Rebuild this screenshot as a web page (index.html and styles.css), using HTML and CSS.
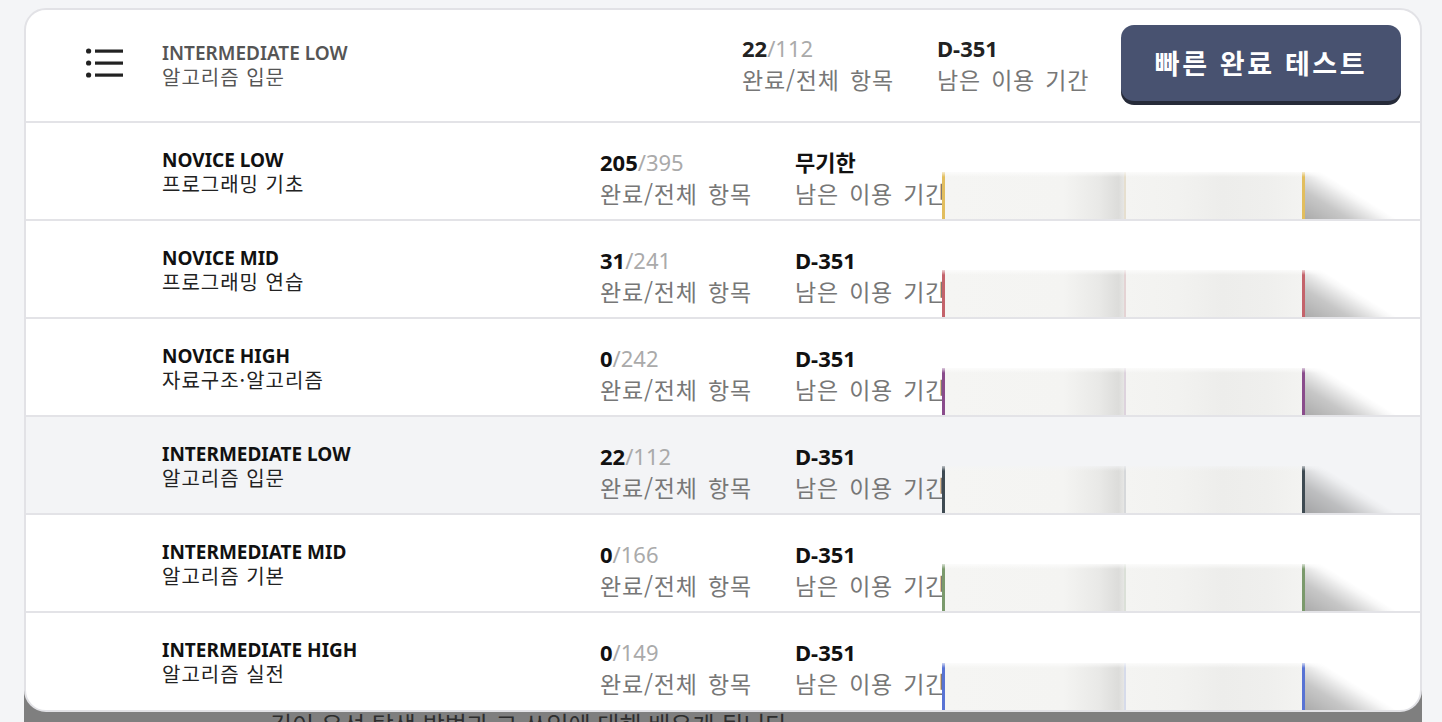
FILE: index.html
```html
<!DOCTYPE html>
<html lang="ko">
<head>
<meta charset="utf-8">
<title>Courses</title>
<link rel="stylesheet" href="styles.css">
</head>
<body>
<div class="page">
  <div class="card">
    <div class="header">
      <svg class="menu-icon" width="38" height="32" viewBox="0 0 38 32">
        <circle cx="2.6" cy="3" r="2.6" fill="#222"/>
        <circle cx="2.6" cy="15" r="2.6" fill="#222"/>
        <circle cx="2.6" cy="27" r="2.6" fill="#222"/>
        <rect x="9" y="1.5" width="28" height="3.2" fill="#222"/>
        <rect x="9" y="13.5" width="28" height="3.2" fill="#222"/>
        <rect x="9" y="25.5" width="28" height="3.2" fill="#222"/>
      </svg>
      <div class="h-title">
        <div class="level">INTERMEDIATE LOW</div>
        <div class="name">알고리즘 입문</div>
      </div>
      <div class="stat">
        <div class="num"><b>22</b><span class="total">/112</span></div>
        <div class="label">완료/전체 항목</div>
      </div>
      <div class="stat remain">
        <div class="num"><b>D-351</b></div>
        <div class="label">남은 이용 기간</div>
      </div>
      <button class="quick-btn">빠른 완료 테스트</button>
    </div>

    <div class="row">
      <div class="r-title"><div class="level">NOVICE LOW</div><div class="name">프로그래밍 기초</div></div>
      <div class="stat"><div class="num"><b>205</b><span class="total">/395</span></div><div class="label">완료/전체 항목</div></div>
      <div class="stat remain"><div class="num"><b>무기한</b></div><div class="label">남은 이용 기간</div></div>
      <div class="book c-yellow"><span class="spine"></span><span class="cover1"></span><span class="divider"></span><span class="cover2"></span><span class="spine"></span><span class="shadow"></span></div>
    </div>

    <div class="row">
      <div class="r-title"><div class="level">NOVICE MID</div><div class="name">프로그래밍 연습</div></div>
      <div class="stat"><div class="num"><b>31</b><span class="total">/241</span></div><div class="label">완료/전체 항목</div></div>
      <div class="stat remain"><div class="num"><b>D-351</b></div><div class="label">남은 이용 기간</div></div>
      <div class="book c-red"><span class="spine"></span><span class="cover1"></span><span class="divider"></span><span class="cover2"></span><span class="spine"></span><span class="shadow"></span></div>
    </div>

    <div class="row">
      <div class="r-title"><div class="level">NOVICE HIGH</div><div class="name">자료구조·알고리즘</div></div>
      <div class="stat"><div class="num"><b>0</b><span class="total">/242</span></div><div class="label">완료/전체 항목</div></div>
      <div class="stat remain"><div class="num"><b>D-351</b></div><div class="label">남은 이용 기간</div></div>
      <div class="book c-purple"><span class="spine"></span><span class="cover1"></span><span class="divider"></span><span class="cover2"></span><span class="spine"></span><span class="shadow"></span></div>
    </div>

    <div class="row active">
      <div class="r-title"><div class="level">INTERMEDIATE LOW</div><div class="name">알고리즘 입문</div></div>
      <div class="stat"><div class="num"><b>22</b><span class="total">/112</span></div><div class="label">완료/전체 항목</div></div>
      <div class="stat remain"><div class="num"><b>D-351</b></div><div class="label">남은 이용 기간</div></div>
      <div class="book c-slate"><span class="spine"></span><span class="cover1"></span><span class="divider"></span><span class="cover2"></span><span class="spine"></span><span class="shadow"></span></div>
    </div>

    <div class="row">
      <div class="r-title"><div class="level">INTERMEDIATE MID</div><div class="name">알고리즘 기본</div></div>
      <div class="stat"><div class="num"><b>0</b><span class="total">/166</span></div><div class="label">완료/전체 항목</div></div>
      <div class="stat remain"><div class="num"><b>D-351</b></div><div class="label">남은 이용 기간</div></div>
      <div class="book c-green"><span class="spine"></span><span class="cover1"></span><span class="divider"></span><span class="cover2"></span><span class="spine"></span><span class="shadow"></span></div>
    </div>

    <div class="row last">
      <div class="r-title"><div class="level">INTERMEDIATE HIGH</div><div class="name">알고리즘 실전</div></div>
      <div class="stat"><div class="num"><b>0</b><span class="total">/149</span></div><div class="label">완료/전체 항목</div></div>
      <div class="stat remain"><div class="num"><b>D-351</b></div><div class="label">남은 이용 기간</div></div>
      <div class="book c-blue"><span class="spine"></span><span class="cover1"></span><span class="divider"></span><span class="cover2"></span><span class="spine"></span><span class="shadow"></span></div>
    </div>
  </div>
  <div class="backdrop">깊이 우선 탐색 방법과 그 쓰임에 대해 배우게 됩니다.</div>
</div>
</body>
</html>
```

FILE: styles.css
```css
* { box-sizing: border-box; }

html, body {
  margin: 0;
  padding: 0;
  background: #f4f5f7;
  font-family: "Noto Sans", "Noto Sans CJK KR", sans-serif;
  color: #222;
  overflow: hidden;
}

.page {
  padding: 8px 20px 0 24px;
  width: 1442px;
  height: 722px;
}

.card {
  position: relative;
  z-index: 1;
  width: 1398px;
  background: #fff;
  border: 2px solid #e2e2e6;
  border-radius: 22px;
  overflow: hidden;
}

.header {
  display: flex;
  align-items: center;
  height: 113px;
  padding: 0 0 3px 60px;
  border-bottom: 2px solid #e3e3e7;
}

.menu-icon {
  flex: 0 0 38px;
  margin-top: -1px;
}

.h-title {
  flex: 0 0 580px;
  margin-left: 38px;
  padding-top: 2px;
  color: #555;
}

.level {
  font-size: 19px;
  font-weight: 700;
  line-height: 23px;
}

.h-title .level { font-weight: 600; color: #555; }
.h-title .name { color: #555; }

.name {
  font-family: "Noto Sans CJK KR", sans-serif;
  font-size: 20px;
  line-height: 23px;
  letter-spacing: 1px;
}

.stat {
  flex: 0 0 195px;
}

.stat.remain {
  flex: 0 0 184px;
}

.num {
  font-size: 22px;
  line-height: 31px;
  color: #222;
  white-space: nowrap;
}

.num b {
  font-weight: 700;
  font-family: "Noto Sans", "Noto Sans CJK KR", sans-serif;
}

.num .total {
  color: #aaa;
  font-weight: 400;
}

.label {
  font-family: "Noto Sans CJK KR", sans-serif;
  font-size: 23px;
  line-height: 31px;
  color: #777;
  letter-spacing: 0.8px;
  word-spacing: 3px;
  white-space: nowrap;
}

.quick-btn {
  width: 280px;
  height: 76px;
  margin-top: -2px;
  border: none;
  border-radius: 13px;
  background: #485270;
  box-shadow: 0 4px 0 #262b39;
  color: #fff;
  font-family: "Noto Sans CJK KR", sans-serif;
  font-size: 27px;
  font-weight: 700;
  letter-spacing: 2.6px;
  padding: 0 0 2px 0;
}

.row {
  position: relative;
  display: flex;
  align-items: flex-start;
  height: 98px;
  padding: 24px 0 0 136px;
  border-bottom: 2px solid #e3e3e7;
}

.row.last { border-bottom: none; height: 97px; }

.row.active { background: #f3f4f6; }

.r-title {
  flex: 0 0 438px;
  padding-top: 2px;
  color: #111;
}

.r-title .name { color: #222; }

.r-title .level { color: #111; }

.row .num b { color: #111; }

/* book illustration overlaying the row's right side */
.book {
  position: absolute;
  left: 916px;
  bottom: 0;
  height: 47px;
  display: flex;
}

.book .spine {
  width: 3px;
  background: var(--c);
}

.book .cover1 {
  width: 179px;
  background: linear-gradient(to right, #f5f5f3 0%, #f4f4f2 66%, #e9e9e7 86%, #dcdcda 97%, #e6e6e4 100%);
}

.book .divider {
  width: 2px;
  background: var(--d);
}

.book .cover2 {
  width: 176px;
  background: linear-gradient(to right, #f4f4f2 0%, #f2f2f0 30%, #ededeb 55%, #efefed 80%, #f3f3f1 100%);
}

.book .shadow {
  width: 95px;
  background: linear-gradient(32deg, rgba(0,0,0,0.33) 0%, rgba(0,0,0,0.22) 26%, rgba(0,0,0,0.1) 40%, rgba(0,0,0,0.03) 48%, rgba(0,0,0,0) 54%);
}

.book::after {
  content: "";
  position: absolute;
  left: 0;
  right: 0;
  top: 0;
  height: 5px;
  background: linear-gradient(to bottom, rgba(255,255,255,0.7), rgba(255,255,255,0));
}

.row.active .book::after {
  background: linear-gradient(to bottom, rgba(243,244,246,0.7), rgba(243,244,246,0));
}

.c-yellow { --c: #e2be5e; --d: #e6dfcf; }
.c-red    { --c: #c4636b; --d: #e4d3d4; }
.c-purple { --c: #8a4c8c; --d: #ddd3dd; }
.c-slate  { --c: #3e4a52; --d: #d6d8da; }
.c-green  { --c: #7b9a6c; --d: #dbe0d8; }
.c-blue   { --c: #5873d4; --d: #d6dbea; }

.backdrop {
  margin-top: -30px;
  width: 1398px;
  height: 60px;
  background: #7f7f7f;
  padding: 27px 0 0 246px;
  font-family: "Noto Sans CJK KR", sans-serif;
  font-size: 24px;
  line-height: 30px;
  color: #2e2e2e;
  white-space: nowrap;
}
```
